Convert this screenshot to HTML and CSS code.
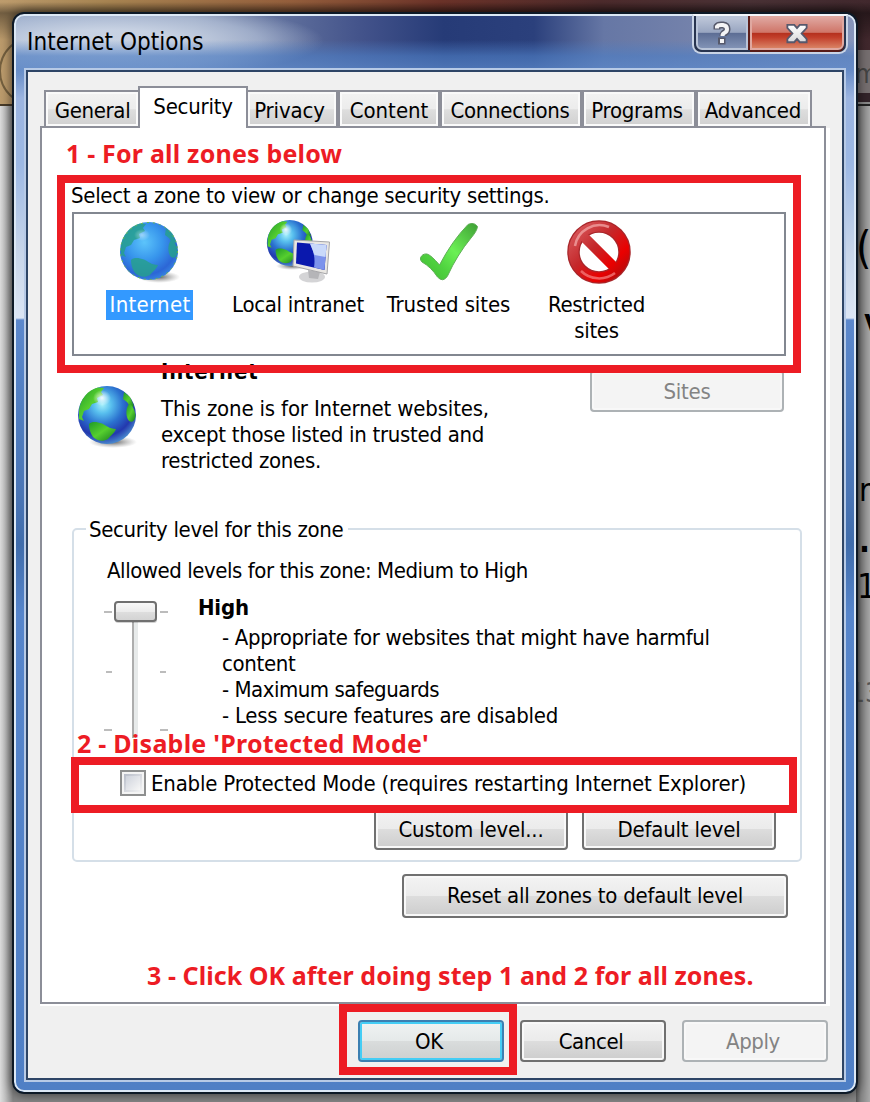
FILE: index.html
```
<!DOCTYPE html>
<html lang="en">
<head>
<meta charset="utf-8">
<title>Internet Options</title>
<link rel="stylesheet" href="styles.css">
</head>
<body>
<svg class="defs" width="0" height="0">
  <defs>
    <radialGradient id="ocean" cx=".42" cy=".32" r=".7">
      <stop offset="0" stop-color="#a5f0fb"/><stop offset=".22" stop-color="#58bfee"/>
      <stop offset=".5" stop-color="#2b72cf"/><stop offset=".78" stop-color="#2338ae"/><stop offset="1" stop-color="#4d8fd0"/>
    </radialGradient>
    <radialGradient id="oceanSel" cx=".42" cy=".35" r=".7">
      <stop offset="0" stop-color="#5cc4fb"/><stop offset=".45" stop-color="#3795ec"/>
      <stop offset=".8" stop-color="#2c66d6"/><stop offset="1" stop-color="#3a8ae4"/>
    </radialGradient>
    <linearGradient id="land" x1="0" y1="0" x2="1" y2="1">
      <stop offset="0" stop-color="#1f9a2a"/><stop offset=".5" stop-color="#56cf2e"/><stop offset="1" stop-color="#157a20"/>
    </linearGradient>
    <radialGradient id="shade"><stop offset="0" stop-color="#444" stop-opacity=".85"/><stop offset="1" stop-color="#888" stop-opacity="0"/></radialGradient>
    <radialGradient id="cloud"><stop offset="0" stop-color="#fff" stop-opacity=".9"/><stop offset="1" stop-color="#fff" stop-opacity="0"/></radialGradient>
    <linearGradient id="tick" x1="1" y1="0" x2="0" y2="1">
      <stop offset="0" stop-color="#3f9f35"/><stop offset=".45" stop-color="#6bf055"/><stop offset=".7" stop-color="#4fd23f"/><stop offset="1" stop-color="#3fb733"/>
    </linearGradient>
    <linearGradient id="ban" gradientUnits="userSpaceOnUse" x1="8" y1="8" x2="56" y2="56">
      <stop offset="0" stop-color="#d8575a"/><stop offset=".4" stop-color="#c4282b"/><stop offset=".75" stop-color="#ea0000"/><stop offset="1" stop-color="#b30d0d"/>
    </linearGradient>
    <linearGradient id="thumb" x1="0" y1="0" x2="0" y2="1">
      <stop offset="0" stop-color="#fafafa"/><stop offset=".5" stop-color="#ececec"/><stop offset=".52" stop-color="#dedede"/><stop offset="1" stop-color="#d2d2d2"/>
    </linearGradient>
    <linearGradient id="glyph" x1="0" y1="0" x2="0" y2="1"><stop offset="0" stop-color="#fff"/><stop offset="1" stop-color="#d8d8da"/></linearGradient>
    <g id="lands">
      <path d="M4 27C5 15 13 6 23 3.500L29 4L26 8L28 11L22 14L23 18L17 20L14 25L9 27L7 33L9 37L4 35Z"/>
      <path d="M14 40C17 37 22 38 27 39.500C31 41 34 45 41 45C39 50 35 52 33 55C28 58 22 57 18 53C15 49 14 44 14 40Z"/>
      <path d="M49 8L55 13L59 22L56 24L52 18L48 15Z"/>
      <path d="M54 20C57 20 60 26 60.500 32C60 37 57 39 54 37C51 34 50 25 54 20Z"/>
    </g>
  </defs>
</svg>

<div class="backdrop">
  <div class="backdrop-top"></div>
  <div class="backdrop-left"></div>
  <div class="backdrop-ring"></div>
  <div class="backdrop-right">
    <span class="peek peek-m">m</span>
    <span class="peek peek-paren">(</span>
    <span class="peek peek-v">v</span>
    <span class="peek peek-r">r</span>
    <span class="peek peek-dot">.</span>
    <span class="peek peek-one">1</span>
    <span class="peek peek-thirteen">13</span>
  </div>
</div>

<div class="dialog">
  <div class="titlebar">
    <h1 class="title">Internet Options</h1>
    <div class="caption">
      <span class="cap help"><svg width="18" height="24" viewBox="0 0 18 24"><path d="M4 8.500V5.500Q5 4 8 4H10Q14 4.500 14 8Q14 10.500 12 11.500Q10 12.500 10 15" fill="none" stroke="#56596b" stroke-width="7"/><rect x="5" y="16.500" width="7.500" height="7" fill="#56596b"/><path d="M4 7.500V5.500Q5 4 8 4H10Q14 4.500 14 8Q14 10.500 12 11.500Q9.500 12.500 9.500 15" fill="none" stroke="#f4f4f6" stroke-width="4"/><rect x="7" y="18" width="4" height="4" fill="#f4f4f6"/></svg></span>
      <span class="cap close"><svg width="22" height="21" viewBox="0 0 24 22"><path d="M1.500 1.500H9L12 5L15 1.500H22.500V5L17 11L22.500 17V20.500H15L12 17L9 20.500H1.500V17L7 11L1.500 5Z" fill="url(#glyph)" stroke="#56586c" stroke-width="2"/></svg></span>
    </div>
  </div>

  <div class="client">
    <div class="tabs">
      <span class="tab t1">General</span><span class="tab t2 active">Security</span><span class="tab t3">Privacy</span><span class="tab t4">Content</span><span class="tab t5">Connections</span><span class="tab t6">Programs</span><span class="tab t7">Advanced</span>
    </div>

    <div class="pane">
      <div class="prompt">Select a zone to view or change security settings.</div>
      <div class="zones">
        <div class="zone selected">
          <svg width="64" height="64" viewBox="0 0 64 64"><ellipse cx="42" cy="57" rx="21" ry="6" fill="url(#shade)"/><circle cx="32" cy="31" r="29" fill="url(#oceanSel)"/><use href="#lands" fill="#27a08f" opacity=".85"/><circle cx="32" cy="31" r="28.500" fill="none" stroke="#6dbd4a" stroke-dasharray="2 4"/><ellipse cx="25" cy="15" rx="8" ry="6" fill="url(#cloud)" opacity=".5"/></svg>
          <span class="zone-name">Internet</span>
        </div>
        <div class="zone">
          <svg width="64" height="64" viewBox="0 0 64 64"><ellipse cx="26" cy="46" rx="16" ry="4" fill="url(#shade)"/><g transform="translate(-1.500 -1.500) scale(.79)"><circle cx="32" cy="31" r="29" fill="url(#ocean)"/><use href="#lands" fill="url(#land)"/><ellipse cx="27" cy="14" rx="8" ry="8" fill="url(#cloud)"/></g><ellipse cx="46" cy="57" rx="13" ry="5.500" fill="#d4d4d6"/><path d="M42 50L54 52L52 59L43 58Z" fill="#b5b5b8"/><path d="M28 20L63.500 22L61 54L27 46Z" fill="#e9e7e3" stroke="#a5a5a8"/><path d="M31 22.500L60.500 25L58.500 50L30 43.500Z" fill="#0a18ad"/><path d="M44 23.500L60.500 25L58.500 50L48 47.500Q50 35 44 23.500Z" fill="#7c93ec"/><path d="M44 23.500L60.500 25L59.500 37L48.500 35Z" fill="#c9d9fa"/></svg>
          <span class="zone-name">Local intranet</span>
        </div>
        <div class="zone trusted">
          <svg width="64" height="64" viewBox="0 0 64 64"><path d="M4.500 38Q6 33.500 11 34Q15 35 23.500 45Q36 21 52 4.500Q58 1.500 61.500 6.500Q61 11 55 18Q41 35 31.500 56Q27 63 21.500 57Q15 47 6 42Q4 40 4.500 38Z" fill="url(#tick)" stroke="#5fae56" stroke-width="1"/></svg>
          <span class="zone-name">Trusted sites</span>
        </div>
        <div class="zone restricted">
          <svg class="ban" width="64" height="64" viewBox="0 0 64 64"><path d="M14 14L50 50" stroke="url(#ban)" stroke-width="10"/><circle cx="32" cy="32" r="25.500" fill="none" stroke="#a8262a" stroke-width="12.500"/><circle cx="32" cy="32" r="25.500" fill="none" stroke="url(#ban)" stroke-width="10"/><path d="M14 14L50 50" stroke="url(#ban)" stroke-width="9"/><path d="M8 26A25 25 0 0 1 42 7" fill="none" stroke="#f0a0a0" stroke-width="2.500" opacity=".8"/><path d="M14 51A26 26 0 0 0 48 53" fill="none" stroke="#f27676" stroke-width="2.500" opacity=".8"/></svg>
          <span class="zone-name">Restricted<br>sites</span>
        </div>
      </div>

      <div class="detail">
        <svg class="detail-icon" width="64" height="66" viewBox="0 0 64 66"><ellipse cx="38" cy="58" rx="24" ry="6" fill="url(#shade)"/><circle cx="32" cy="31" r="29" fill="url(#ocean)"/><use href="#lands" fill="url(#land)"/><ellipse cx="27" cy="14" rx="9" ry="8" fill="url(#cloud)"/></svg>
        <div class="detail-text">
          <strong class="detail-name">Internet</strong>
          <p class="detail-desc"><span class="w1">This zone is for Internet websites,</span><br>except those listed in trusted and<br>restricted zones.</p>
        </div>
        <span class="btn disabled sites">Sites</span>
      </div>

      <fieldset class="level">
        <legend><span>Security level for this zone</span></legend>
        <div class="allowed">Allowed levels for this zone: Medium to High</div>
        <div class="level-row">
          <svg class="slider" width="66" height="146" viewBox="0 0 66 146"><path d="M0 17H8M56 17H64M2 77H8M56 77H62M0 135H8M56 135H64" stroke="#bcbcbc" stroke-width="2"/><rect x="28" y="10" width="2" height="133" fill="#adadad"/><rect x="30" y="10" width="4" height="133" fill="#e7eaea"/><rect x="11" y="8" width="42" height="20" rx="3" fill="#000" opacity=".18"/><rect x="11" y="7" width="41" height="19" rx="3" fill="url(#thumb)" stroke="#707070" stroke-width="2"/></svg>
          <div class="level-text">
            <strong>High</strong>
            <ul><li class="l1">- Appropriate for websites that might have harmful<br>content</li><li class="l2">- Maximum safeguards</li><li class="l3">- Less secure features are disabled</li></ul>
          </div>
        </div>
        <div class="protect"><span class="check"></span><span class="protect-text">Enable Protected Mode (requires restarting Internet Explorer)</span></div>
        <div class="level-buttons"><span class="btn">Custom level...</span><span class="btn">Default level</span></div>
      </fieldset>
      <div class="reset-row"><span class="btn reset">Reset all zones to default level</span></div>
    </div>

    <div class="footer"><span class="btn default">OK</span><span class="btn">Cancel</span><span class="btn disabled">Apply</span></div>
  </div>
</div>

<div class="mark mark-zones"></div>
<div class="mark mark-protect"></div>
<div class="mark mark-ok"></div>
<div class="note note-1">1 - For all zones below</div>
<div class="note note-2">2 - Disable 'Protected Mode'</div>
<div class="note note-3">3 - Click OK after doing step 1 and 2 for all zones.</div>
</body>
</html>
```
FILE: styles.css
```
* { box-sizing: border-box; }
body {
  margin: 0; width: 870px; height: 1102px; overflow: hidden; position: relative;
  background: #868686;
  font: 22px/26px "DejaVu Sans Condensed", "Noto Sans", sans-serif;
  letter-spacing: -0.3px; color: #000;
}
.defs { position: absolute; }
svg { display: block; flex: none; }

/* whatever sits behind the dialog */
.backdrop { position: absolute; inset: 0; overflow: hidden; }
.backdrop-top { position: absolute; left: 0; top: 0; width: 870px; height: 105px;
  background: linear-gradient(rgba(0,0,0,0) 2px, rgba(0,0,0,.4) 13px, rgba(0,0,0,0) 40px), linear-gradient(90deg, #bd9c6d 0, #a98552 110px, #96603d 290px, #6d3329 440px, #4d2b2c 600px, #4a3236 750px, #41282d 870px); }
.backdrop-left { position: absolute; left: 0; top: 104px; width: 14px; height: 998px; border-top: 2px solid #493c2a;
  background: linear-gradient(90deg, #dedede, #c2c2c2 5px, #858585 13px); }
.backdrop-ring { position: absolute; left: -1px; top: 36px; width: 70px; height: 70px; border: 2px solid #75603f; border-radius: 50%; }
.backdrop-right { position: absolute; left: 856px; top: 50px; width: 14px; height: 1052px;
  background: linear-gradient(#777071 0 43px, #33242a 43px 52px, #8a8a8a 52px 54px, #222 54px 56px, transparent 56px), linear-gradient(90deg, #565656, #858585 5px, #a9a9a9 14px); }
.peek { position: absolute; left: 3px; font-size: 26px; line-height: 30px; letter-spacing: 0; }
.peek-m { left: -1px; top: 9px; color: #444; }
.peek-paren { left: 0; top: 176px; font-size: 44px; line-height: 44px; }
.peek-v { left: 8px; top: 256px; font-weight: bold; font-size: 30px; }
.peek-r { left: 3px; top: 425px; font-size: 32px; }
.peek-dot { left: 3px; top: 476px; font-weight: bold; font-size: 32px; }
.peek-one { left: 1px; top: 521px; font-size: 34px; }
.peek-thirteen { left: -6px; top: 628px; color: #555; }

/* window frame */
.dialog {
  width: 846px; height: 1082px; position: relative; top: 12px; left: 12px;
  border: 2px solid #0d1926; border-radius: 12px; box-shadow: inset 0 0 0 2px #dce8f5, 0 0 12px rgba(0,0,0,.65);
  padding: 2px 10px 8px;
  background:
    linear-gradient(transparent 0 56px, #9bb4e0 84px, #9cb8e4 150px, #c8d6ea 240px, #dbe5f4 304px, #5c88cc 306px, #4f7dc0 400px, #4a75b5 480px, #3f6cab 530px, #5685cb 600px, #4f7fc5 100%),
    linear-gradient(transparent 26px, rgba(78,126,196,.65) 42px, rgba(91,136,202,.75) 56px),
    radial-gradient(ellipse 215px 38px at 95px 27px, rgba(203,213,229,.95) 30%, rgba(190,203,224,.6) 70%, rgba(180,194,218,0)),
    linear-gradient(90deg, #8397bb 0, #8796b5 180px, #5f6f9c 270px, #42528a 350px, #263b77 430px, #2b407c 520px, #6677a5 590px, #7482ab 680px, #8795bb 100%);
}
.titlebar { height: 52px; display: flex; justify-content: space-between; padding-left: 3px; }
.title { margin: 13px 0 0; font-size: 24px; line-height: 26px; font-weight: normal; letter-spacing: .05px; }
.caption { display: flex; width: 156px; height: 40px; margin: -2px -2px 0 0; border: 2px solid #c9d4e6; border-top-color: #f2f5fa; border-radius: 0 0 9px 9px; background: #28344f; }
.cap { display: flex; align-items: center; justify-content: center; border: 2px solid #b9c4d8; }
.help { width: 52px; margin: 0 2px 2px; border-radius: 0 0 0 6px; background: linear-gradient(#bcc5d8, #98a5c0 48%, #5c6d94 50%, #8192b5); }
.close { flex: 1; margin: 0 2px 2px 0; border-color: #e0a8a0; border-radius: 0 0 6px 0; background: linear-gradient(#dfa59e, #cf7568 48%, #b42f1d 50%, #c23f2b 65%, #d98264); box-shadow: -2px 0 #5d1d18, 0 2px #571b18; }
.client {
  width: 814px; height: 1006px; margin: 4px 4px 0; padding: 14px 14px 0 12px; background: #f0f0f0;
  outline: 2px solid #2e4566; box-shadow: 0 0 0 4px #b7cae6;
}

/* tabs */
.tabs { display: flex; align-items: flex-end; height: 42px; margin: 0 0 -2px 4px; position: relative; }
.tab {
  height: 38px; border: 2px solid #8c8e98; text-align: center; line-height: 38px;
  box-shadow: inset 0 0 0 2px #fafafa; background: linear-gradient(#f3f3f3, #ececec 50%, #dedede 52%, #d0d0d0);
}
.active { height: 42px; background: #fff; border-bottom: 0; position: relative; box-shadow: none; }
.t1 { width: 96px; margin-right: -2px; letter-spacing: -.35px; padding-left: 1px; }
.t2 { width: 110px; line-height: 38px; letter-spacing: -.25px; }
.t3 { width: 92px; margin-left: -2px; padding-right: 5px; letter-spacing: -.15px; }
.t4 { width: 102px; letter-spacing: 0; }
.t5 { width: 142px; letter-spacing: -.3px; padding-right: 2px; }
.t6 { width: 114px; letter-spacing: -.3px; padding-right: 4px; }
.t7 { width: 116px; letter-spacing: -.15px; padding-right: 2px; }

.pane { width: 786px; height: 878px; border: 2px solid #8c8e98; background: #fff; box-shadow: 4px 2px 0 #fff, 0 2px 0 #fff; padding: 55px 22px 0 30px; }
.prompt { margin: 0 0 3px -1px; }
.zones { width: 714px; height: 144px; border: 2px solid #828790; padding-top: 6px; display: grid; grid-template-columns: repeat(4, 149px); }
.zone { display: flex; flex-direction: column; align-items: center; text-align: center; letter-spacing: -.3px; }
.zone-name { margin-top: 6px; padding: 2px 3px 2px 4px; }
.selected .zone-name { margin-left: 2px; background: #3399ff; color: #fff; letter-spacing: .3px; }
.trusted { letter-spacing: -.1px; padding-left: 3px; }
.restricted { padding-left: 1px; }
.ban { position: relative; left: 3px; }

.detail { display: flex; height: 118px; padding: 3px 0 0 3px; }
.detail-icon { margin-top: 25px; }
.detail-text { width: 429px; margin-left: 22px; }
.detail-name { display: block; letter-spacing: .8px; }
.detail-desc { margin: 11px 0 0; white-space: nowrap; }
.w1 { letter-spacing: -.17px; }

/* buttons */
.btn {
  display: block; width: 194px; height: 42px; line-height: 39px; text-align: center; letter-spacing: -.2px;
  border: 2px solid #707070; border-radius: 4px; box-shadow: inset 0 0 0 2px #f8f8f8;
  background: linear-gradient(#f3f3f3, #ebebeb 50%, #dddddd 51%, #cdcdcd);
}
.disabled { color: #838383; border-color: #adb2b5; background: #f4f4f4; }
.default { border-color: #3c7fb1; box-shadow: inset 0 0 0 2px #44cdf5; background: linear-gradient(#f0f3f3, #e5e9e9 50%, #d9dcdc 51%, #cdd0d0); }
.sites { margin: 11px 0 0 0; letter-spacing: -.3px; line-height: 40px; }

/* security level group */
.level { width: 730px; height: 346px; margin: 42px 0 0; padding: 0 24px 0 12px; border: 2px solid #d5dfe8; border-radius: 5px; }
.level legend { width: 262px; padding: 0 0 0 3px; letter-spacing: -.35px; white-space: nowrap; }
.level legend span { position: relative; top: 1px; }
.allowed { margin: 16px 0 11px 21px; letter-spacing: -.45px; }
.level-row { display: flex; height: 134px; padding-left: 18px; }
.level-text { margin-left: 28px; }
.level-text strong { display: block; letter-spacing: -.2px; }
.level-text ul { list-style: none; margin: 4px 0 0 24px; padding: 0; white-space: nowrap; }
.l1 { letter-spacing: -.35px; }
.l2 { letter-spacing: -.48px; }
.l3 { letter-spacing: -.25px; }
.protect { display: flex; align-items: center; gap: 5px; margin: 41px 0 0 34px; height: 26px; white-space: nowrap; letter-spacing: -.2px; }
.protect-text { padding-top: 1px; }
.check { width: 26px; height: 26px; border: 2px solid #8e8f8f; padding: 2px; background: linear-gradient(135deg, #b7bcc8, #f4f4f4) content-box, #f4f4f4; }
.check::before { content: ""; display: block; width: 14px; height: 14px; margin: 2px; background: linear-gradient(135deg, #cfd3dc, #f6f6f6); }
.level-buttons { display: flex; justify-content: flex-end; gap: 14px; margin-top: 12px; }
.reset-row { display: flex; justify-content: flex-end; margin: 12px 14px 0 0; }
.reset { width: 386px; height: 44px; line-height: 40px; letter-spacing: -.25px; }
.footer { display: flex; justify-content: flex-end; gap: 16px; margin-top: 16px; }
.footer .btn { width: 146px; line-height: 40px; padding-right: 4px; letter-spacing: -.4px; }

/* red annotations laid over the dialog */
.mark { position: absolute; border: 8px solid #ed1c24; }
.mark-zones { left: 57px; top: 175px; width: 744px; height: 198px; }
.mark-protect { left: 71px; top: 757px; width: 726px; height: 56px; }
.mark-ok { left: 339px; top: 1004px; width: 178px; height: 71px; }
.note { position: absolute; color: #ed1c24; font: bold 25px/30px "Noto Sans", sans-serif; letter-spacing: .06px; white-space: nowrap; }
.note-1 { left: 66px; top: 138px; letter-spacing: .2px; }
.note-2 { left: 77px; top: 728px; letter-spacing: .25px; }
.note-3 { left: 147px; top: 960px; }
```
